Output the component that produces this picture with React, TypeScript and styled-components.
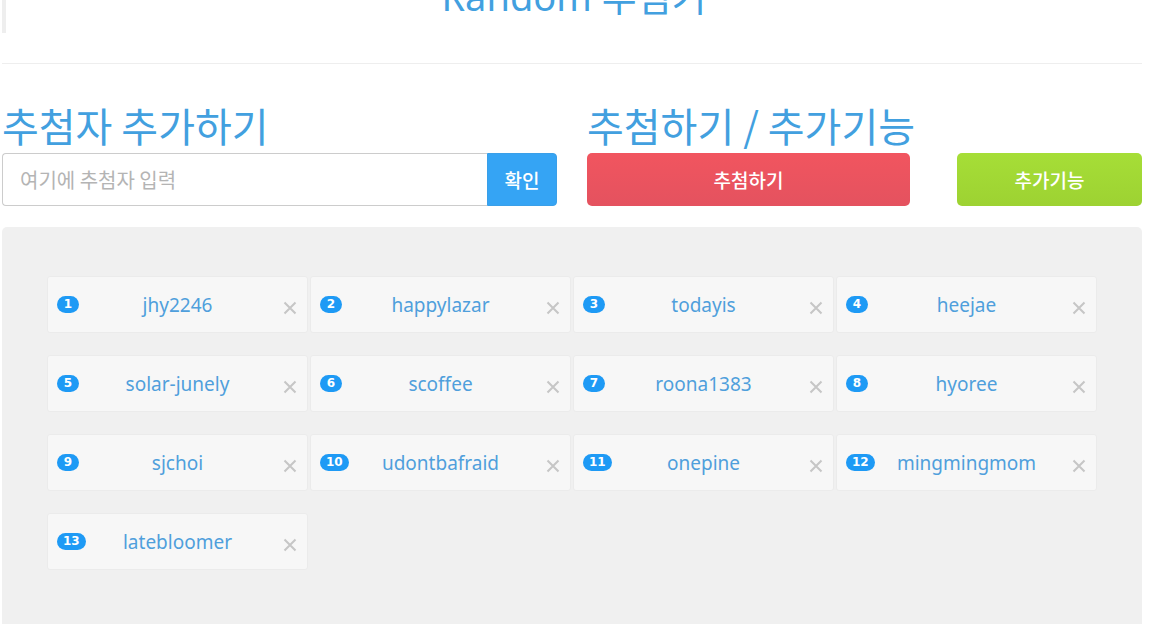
import React from "react";
import styled, { createGlobalStyle } from "styled-components";

const GlobalStyle = createGlobalStyle`
  html, body {
    margin: 0;
    padding: 0;
    overflow: hidden;
    background: #ffffff;
  }
  body {
    font-family: "Noto Sans", "Noto Sans CJK KR", sans-serif;
  }
  * { box-sizing: border-box; }
`;

const Container = styled.div`
  width: 1140px;
  margin-left: 2px;
`;

const TitleBar = styled.header`
  margin-top: -23px;
  height: 56px;
  border-left: 4px solid #eeeeee;
  text-align: center;
`;

const Title = styled.h1`
  margin: 0;
  font-size: 38px;
  line-height: 38px;
  font-weight: 400;
  color: #42a0df;
`;

const Divider = styled.hr`
  margin: 30px 0 0;
  border: 0;
  border-top: 1px solid #eeeeee;
  height: 0;
`;

const Columns = styled.div`
  display: grid;
  grid-template-columns: 555px 555px;
  column-gap: 30px;
  margin-top: 40px;
`;

const Column = styled.section`
  display: flex;
  flex-direction: column;
`;

const Heading = styled.h2`
  margin: 0 0 6px;
  font-family: "Noto Sans CJK KR", sans-serif;
  font-size: 40px;
  line-height: 43px;
  font-weight: 400;
  color: #42a0df;
  white-space: nowrap;
`;

const InputGroup = styled.div`
  display: flex;
  height: 53px;
`;

const NameInput = styled.input`
  flex: 1;
  min-width: 0;
  border: 1px solid #cccccc;
  border-right: none;
  border-radius: 4px 0 0 4px;
  padding: 0 17px;
  font-family: "Noto Sans CJK KR", sans-serif;
  font-size: 20px;
  color: #555;
  outline: none;
  &::placeholder {
    color: #b4b4b4;
  }
`;

const ConfirmButton = styled.button`
  width: 70px;
  border: 1px solid #3a9fe8;
  border-radius: 0 4px 4px 0;
  background: #35a4f4;
  color: #ffffff;
  font-family: "Noto Sans CJK KR", sans-serif;
  font-size: 19px;
  font-weight: 500;
  padding: 0;
  cursor: pointer;
`;

const ButtonRow = styled.div`
  display: flex;
  justify-content: space-between;
  height: 53px;
`;

const ActionButton = styled.button<{ $tone: "red" | "green"; $width: number }>`
  width: ${(p) => p.$width}px;
  border: none;
  border-radius: 5px;
  background: ${(p) =>
    p.$tone === "red"
      ? "linear-gradient(to bottom, #f1555f, #e4525f)"
      : "linear-gradient(to bottom, #a6de37, #9dd232)"};
  color: #ffffff;
  font-family: "Noto Sans CJK KR", sans-serif;
  font-size: 19px;
  font-weight: 500;
  padding: 0;
  cursor: pointer;
`;

const Panel = styled.section`
  margin-top: 21px;
  min-height: 420px;
  background: #f0f0f0;
  border-radius: 5px 5px 0 0;
  padding: 49px 45px;
`;

const TagGrid = styled.div`
  display: grid;
  grid-template-columns: repeat(4, 261px);
  column-gap: 2px;
  row-gap: 22px;
`;

const Tag = styled.div`
  display: grid;
  grid-template-columns: 40px 1fr 40px;
  align-items: center;
  height: 57px;
  background: #f7f7f7;
  border: 1px solid #ebebeb;
  border-radius: 3px;
`;

const Badge = styled.span`
  justify-self: start;
  margin-left: 9px;
  min-width: 22px;
  height: 17px;
  padding: 0 6px;
  border-radius: 9px;
  background: #1e9af5;
  color: #ffffff;
  font-family: "DejaVu Sans", sans-serif;
  font-weight: 700;
  font-size: 12px;
  line-height: 17px;
  text-align: center;
`;

const Name = styled.span`
  text-align: center;
  font-family: "Noto Sans", sans-serif;
  font-size: 19px;
  color: #4f9fdc;
  white-space: nowrap;
`;

const RemoveButton = styled.button`
  justify-self: end;
  margin: 6px 10px 0 0;
  width: 14px;
  height: 14px;
  padding: 0;
  border: none;
  background: none;
  display: flex;
  cursor: pointer;
`;

const names = [
  "jhy2246",
  "happylazar",
  "todayis",
  "heejae",
  "solar-junely",
  "scoffee",
  "roona1383",
  "hyoree",
  "sjchoi",
  "udontbafraid",
  "onepine",
  "mingmingmom",
  "latebloomer",
];

const CloseIcon = () => (
  <svg width="14" height="14" viewBox="0 0 14 14">
    <path d="M1.5 1.5 L12.5 12.5 M12.5 1.5 L1.5 12.5" stroke="#c6c6c6" strokeWidth="2" />
  </svg>
);

export default function App() {
  return (
    <>
      <GlobalStyle />
      <Container>
        <TitleBar>
          <Title>Random 추첨기</Title>
        </TitleBar>
        <Divider />
        <Columns>
          <Column>
            <Heading>추첨자 추가하기</Heading>
            <InputGroup>
              <NameInput placeholder="여기에 추첨자 입력" />
              <ConfirmButton>확인</ConfirmButton>
            </InputGroup>
          </Column>
          <Column>
            <Heading>추첨하기 / 추가기능</Heading>
            <ButtonRow>
              <ActionButton $tone="red" $width={323}>추첨하기</ActionButton>
              <ActionButton $tone="green" $width={185}>추가기능</ActionButton>
            </ButtonRow>
          </Column>
        </Columns>
        <Panel>
          <TagGrid>
            {names.map((n, i) => (
              <Tag key={n}>
                <Badge>{i + 1}</Badge>
                <Name>{n}</Name>
                <RemoveButton aria-label="remove">
                  <CloseIcon />
                </RemoveButton>
              </Tag>
            ))}
          </TagGrid>
        </Panel>
      </Container>
    </>
  );
}
